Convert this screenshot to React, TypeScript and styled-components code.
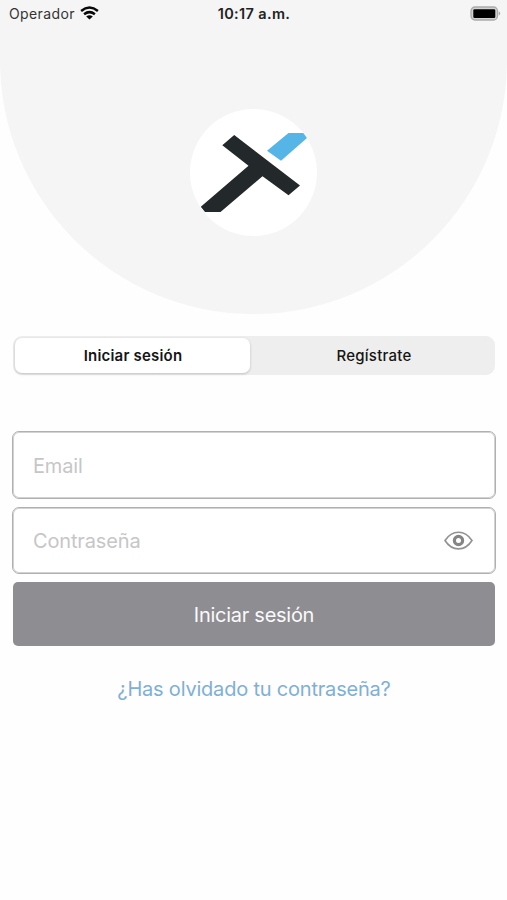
import React from "react";
import styled, { createGlobalStyle } from "styled-components";

const GlobalStyle = createGlobalStyle`
  * { box-sizing: border-box; }
  body { margin: 0; background: #fff; font-family: Inter, "Liberation Sans", sans-serif; }
  button, input { font: inherit; margin: 0; }
`;

const Screen = styled.main`
  width: 507px;
  height: 900px;
  overflow: hidden;
  background: #fefefe;
  display: flex;
  flex-direction: column;
`;

const Header = styled.header`
  height: 314px;
  flex: none;
  background: #f5f5f5;
  border-radius: 0 0 253.5px 253.5px;
  display: flex;
  flex-direction: column;
  align-items: center;
`;

const StatusBar = styled.div`
  width: 100%;
  height: 28px;
  padding: 0 6px 1px 9px;
  display: grid;
  grid-template-columns: 1fr auto 1fr;
  align-items: center;
  color: #222;
`;

const Carrier = styled.div`
  display: flex;
  align-items: center;
  gap: 5px;
  font-size: 14px;
  line-height: 20px;
  letter-spacing: 0.38px;
  color: #333;
`;

const Clock = styled.time`
  font-size: 14.5px;
  line-height: 20px;
  font-weight: 600;
  letter-spacing: 0.35px;
  margin-right: 2px;
`;

const Battery = styled.svg`
  justify-self: end;
  display: block;
`;

const Logo = styled.div`
  width: 127px;
  height: 127px;
  margin-top: 81px;
  border-radius: 50%;
  background: #fff;
  overflow: hidden;
  svg { display: block; }
`;

const Tabs = styled.div`
  flex: none;
  height: 39px;
  margin: 22px 12px 0 13px;
  padding: 2px;
  border-radius: 9px;
  background: #eee;
  display: grid;
  grid-template-columns: 235px 1fr;
`;

const Tab = styled.button<{ $active?: boolean }>`
  border: 0;
  padding: ${(p) => (p.$active ? "0 0 0 1px" : "0 0 0 5px")};
  border-radius: 7px;
  font-size: 15px;
  font-weight: ${(p) => (p.$active ? 600 : 500)};
  letter-spacing: ${(p) => (p.$active ? "0.2px" : "0.25px")};
  color: #151515;
  background: ${(p) => (p.$active ? "#fff" : "transparent")};
  box-shadow: ${(p) => (p.$active ? "0 1px 3px rgba(0, 0, 0, 0.2)" : "none")};
`;

const Form = styled.form`
  margin: 56px 11px 0 12px;
  display: flex;
  flex-direction: column;
`;

const Field = styled.label<{ $height: number }>`
  height: ${(p) => p.$height}px;
  margin-bottom: 8px;
  padding: 0 22px 0 20px;
  border: 1px solid #b0b0b1;
  box-shadow: inset 0 0 0 1px #d2d2d3;
  border-radius: 7px;
  background: #fff;
  display: flex;
  align-items: center;
`;

const Input = styled.input<{ $drop?: number }>`
  flex: 1;
  min-width: 0;
  border: 0;
  outline: 0;
  padding: ${(p) => p.$drop ?? 0}px 0 0;
  background: transparent;
  font-size: 20px;
  line-height: 26px;
  font-weight: 400;
  letter-spacing: -0.15px;
  &::placeholder { color: #c6c6c7; opacity: 1; }
`;

const Reveal = styled.button`
  border: 0;
  padding: 0;
  background: none;
  svg { display: block; }
`;

const Submit = styled.button`
  height: 64px;
  margin: 0 1px;
  border: 0;
  padding: 2px 0 0;
  border-radius: 5px;
  background: #8e8d92;
  color: #fafafa;
  font-size: 20px;
  font-weight: 400;
  letter-spacing: -0.27px;
`;

const Forgot = styled.a`
  align-self: center;
  margin-top: 30px;
  font-size: 20px;
  line-height: 26px;
  font-weight: 400;
  letter-spacing: -0.2px;
  color: #7eb0d6;
  text-decoration: none;
`;

const Wifi = () => (
  <svg width="19" height="15" viewBox="0 0 19 15" aria-hidden="true">
    <g fill="none" stroke="#080808" strokeWidth="2.5">
      <path d="M1.1 4.9Q9.5-1.8 17.9 4.9" />
      <path d="M4.1 8.2Q9.5 4 14.9 8.2" />
    </g>
    <path d="M6.2 10.4Q9.5 8.1 12.8 10.4L9.5 13.6Z" fill="#080808" />
  </svg>
);

export default function App() {
  return (
    <>
      <GlobalStyle />
      <Screen>
        <Header>
          <StatusBar>
            <Carrier>Operador <Wifi /></Carrier>
            <Clock>10:17 a.m.</Clock>
            <Battery width="31" height="15" viewBox="0 0 31 15" aria-label="Batería">
              <rect x="1" y="1" width="26.5" height="13" rx="4" fill="#d2d2d2" stroke="#ababab" strokeWidth="1.3" />
              <rect x="3.3" y="3.3" width="22" height="8.7" rx="1.2" fill="#000" />
              <path d="M28.7 5.3Q31.8 7.5 28.7 9.7Z" fill="#aaa" />
            </Battery>
          </StatusBar>
          <Logo>
            <svg width="127" height="127" viewBox="0 0 127 127" aria-label="Logotipo">
              <path d="M44.2 26L110 76.5L98.5 86.3L72.5 67.2L30.5 103H15L10.8 97.7L58.5 56.8L32.3 36.2Z" fill="#23282b" />
              <path d="M77 41.8L98.5 24H114.5L117.3 28.8L91 51.8Z" fill="#55b5e7" />
            </svg>
          </Logo>
        </Header>
        <Tabs>
          <Tab $active>Iniciar sesión</Tab>
          <Tab>Regístrate</Tab>
        </Tabs>
        <Form>
          <Field $height={68}>
            <Input type="email" placeholder="Email" $drop={2} />
          </Field>
          <Field $height={67}>
            <Input type="password" placeholder="Contraseña" />
            <Reveal type="button" aria-label="Mostrar contraseña">
              <svg width="29" height="19" viewBox="0 0 29 19">
                <path d="M1 9.5C8-1.6 21-1.6 28 9.5C21 20.6 8 20.6 1 9.5Z" fill="none" stroke="#929292" strokeWidth="1.6" />
                <circle cx="14.5" cy="9.5" r="4.1" fill="none" stroke="#858587" strokeWidth="3.2" />
              </svg>
            </Reveal>
          </Field>
          <Submit type="button">Iniciar sesión</Submit>
          <Forgot href="#">¿Has olvidado tu contraseña?</Forgot>
        </Form>
      </Screen>
    </>
  );
}
